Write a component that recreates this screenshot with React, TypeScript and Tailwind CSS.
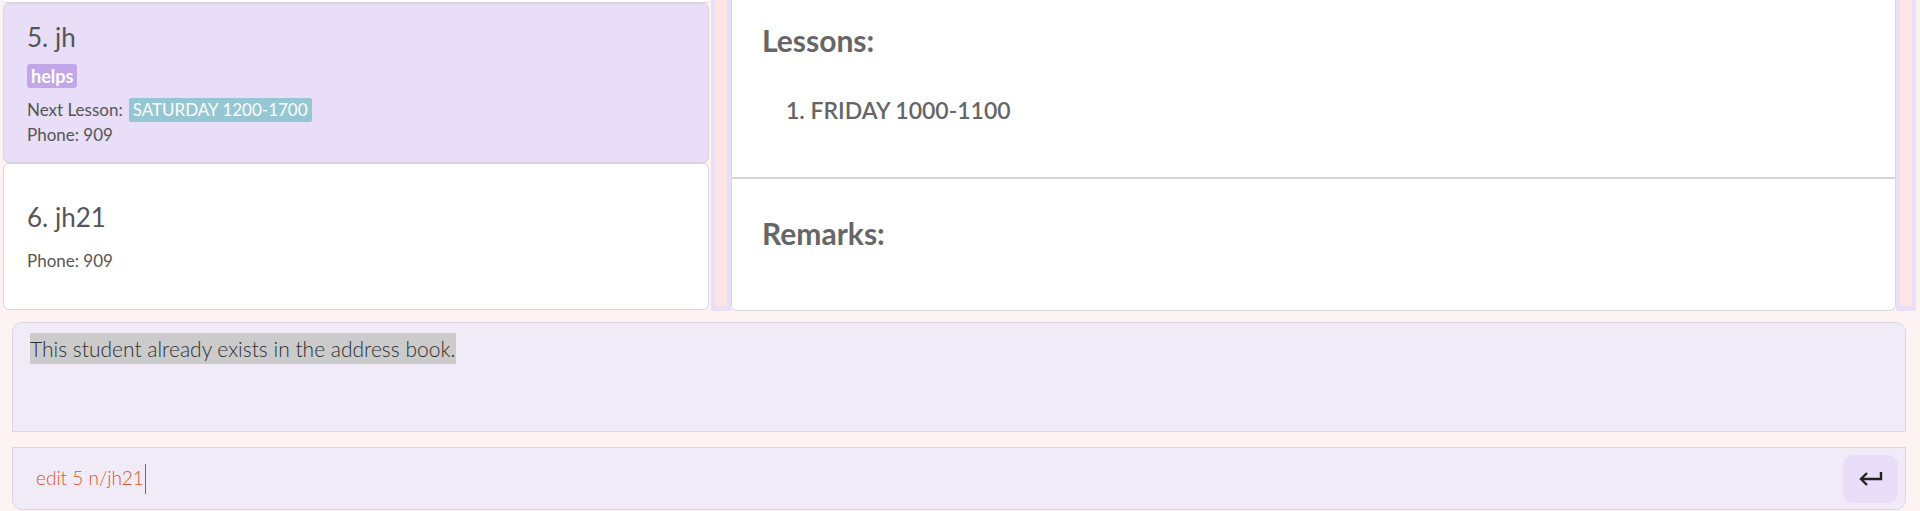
import React from "react";

const FONT = "font-['Lato','Open_Sans',sans-serif]";

function Tag({ children }: { children: React.ReactNode }) {
  return (
    <span className="rounded-[3px] bg-[#c3a6e8] px-[4px] text-[18px] font-bold leading-[24px] text-white">
      {children}
    </span>
  );
}

function PersonCard({
  index,
  name,
  phone,
  tags,
  nextLesson,
  selected,
  className,
}: {
  index: number;
  name: string;
  phone: string;
  tags?: string[];
  nextLesson?: string;
  selected?: boolean;
  className: string;
}) {
  return (
    <div
      className={`flex flex-col rounded-[6px] border border-[#d9d4de] px-[23px] ${className} ${
        selected ? "bg-[#e8def7]" : "bg-white"
      }`}
    >
      <p className="text-[26px] leading-[32px] text-[#555]">
        {index}. {name}
      </p>
      {tags && (
        <div className="mt-[11px] flex gap-1">
          {tags.map((t) => (
            <Tag key={t}>{t}</Tag>
          ))}
        </div>
      )}
      {nextLesson && (
        <div className="mt-[10px] flex items-center gap-[6px] text-[17px] leading-[24px] text-[#555]">
          <span>Next Lesson:</span>
          <span className="rounded-[2px] bg-[#95c6d4] px-[4px] text-white">{nextLesson}</span>
        </div>
      )}
      <p className={`${nextLesson ? "mt-[1px]" : "mt-[16px]"} text-[17px] leading-[24px] text-[#555]`}>
        Phone: {phone}
      </p>
    </div>
  );
}

function ScrollTrack() {
  return (
    <div className="flex w-[20px] flex-col bg-[#e9e0f6] px-[4px] pb-[5px]">
      <div className="flex-1 rounded-b-[4px] bg-[#fde5e6]" />
    </div>
  );
}

function EnterIcon() {
  return (
    <svg width="26" height="18" viewBox="0 0 26 18" fill="none" aria-hidden="true">
      <path d="M23 2v7H3" stroke="#222" strokeWidth="2.4" />
      <path d="M9 3L3 9l6 6" stroke="#222" strokeWidth="2.4" strokeLinejoin="miter" />
    </svg>
  );
}

export default function App() {
  return (
    <div className={`flex h-[511px] w-[1920px] flex-col overflow-hidden bg-[#fdf3f3] ${FONT}`}>
      {/* list + detail */}
      <div className="flex h-[311px]">
        <div className="flex w-[731px]">
          <div className="flex w-[711px] flex-col pb-[1px] pl-[3px] pr-[2px]">
            <div className="h-[3px] rounded-b-[6px] border-b border-[#d9d4de] bg-white" />
            <PersonCard
              index={5}
              name="jh"
              phone="909"
              tags={["helps"]}
              nextLesson="SATURDAY 1200-1700"
              selected
              className="h-[160px] pt-[17px]"
            />
            <PersonCard index={6} name="jh21" phone="909" className="h-[147px] pt-[37px]" />
          </div>
          <ScrollTrack />
        </div>

        <div className="flex flex-1">
          <div className="flex w-[1165px] flex-col rounded-b-[6px] border-x border-b border-[#d9d9d9] bg-white">
            <div className="h-[179px] border-b-2 border-[#d6d6d6] pl-[30px] pt-[22px]">
              <h2 className="text-[30px] font-bold leading-[36px] text-[#666]">Lessons:</h2>
              <ol className="mt-[37px] pl-[24px] text-[23px] font-semibold leading-[30px] text-[#666]">
                <li>1. FRIDAY 1000-1100</li>
              </ol>
            </div>
            <div className="pl-[30px] pt-[36px]">
              <h2 className="text-[30px] font-bold leading-[36px] text-[#666]">Remarks:</h2>
            </div>
          </div>
          <ScrollTrack />
        </div>
      </div>

      {/* result display */}
      <div className="ml-[12px] mt-[11px] h-[110px] w-[1894px] rounded-t-[10px] border border-[#dbd6e0] bg-[#f1ebf7] pl-[17px] pt-[10px]">
        <span className="bg-[#cbcbcb] py-[3px] pr-[1px] text-[21px] font-light leading-[32px] text-[#2f2f2f]">
          This student already exists in the address book.
        </span>
      </div>

      {/* command box */}
      <div className="ml-[12px] mt-[15px] flex h-[63px] w-[1894px] items-center justify-between rounded-b-[10px] border border-[#dbd6e0] bg-[#f1ebf7] pl-[23px] pr-[7px]">
        <div className="flex items-center">
          <span className="text-[19px] font-light text-[#db5330]">edit 5 n/jh21</span>
          <span className="ml-[1px] h-[30px] w-[1px] bg-[#c9473a]" />
        </div>
        <button className="flex h-[48px] w-[55px] items-center justify-center rounded-[10px] bg-[#e8def8]">
          <EnterIcon />
        </button>
      </div>
    </div>
  );
}
